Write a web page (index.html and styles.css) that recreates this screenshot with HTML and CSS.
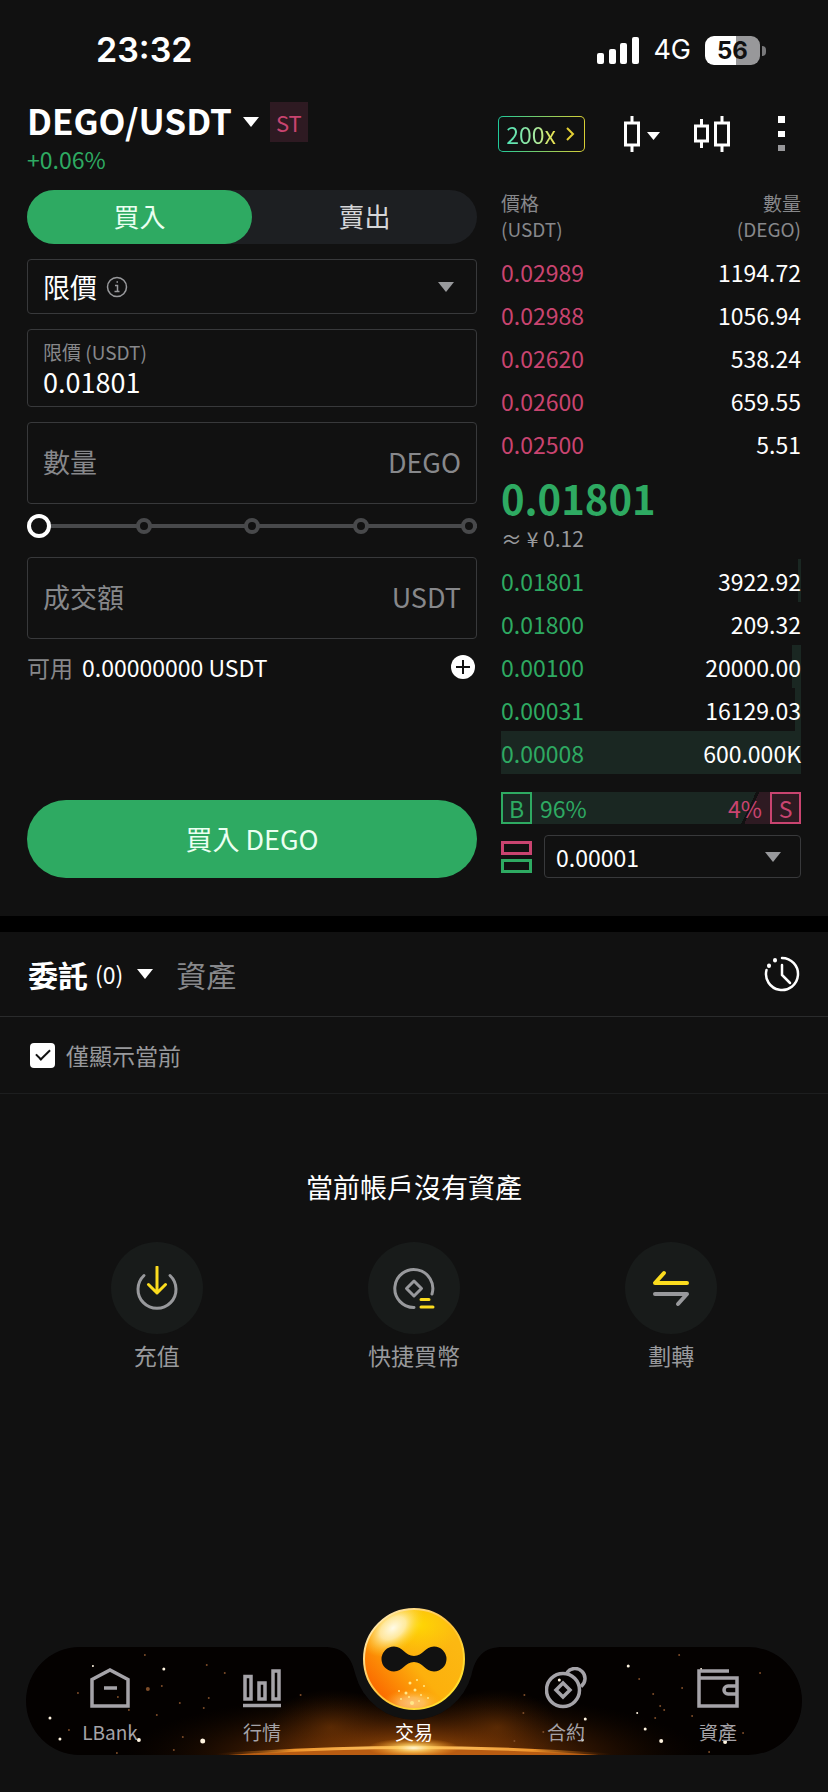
FILE: index.html
```html
<!DOCTYPE html>
<html lang="zh-Hant">
<head>
    <meta charset="UTF-8">
    <meta name="viewport" content="width=device-width, initial-scale=1.0">
    <title>DEGO/USDT</title>
    <link rel="stylesheet" href="styles.css">
</head>
<body>
    <div class="status-bar">
        <span class="time">23:32</span>
        <div class="status-icons">
            <svg width="42" height="27" viewBox="0 0 42 27" fill="#fff">
                <rect x="0" y="16" width="7" height="11" rx="2"/>
                <rect x="12" y="12" width="7" height="15" rx="2"/>
                <rect x="23" y="6" width="7" height="21" rx="2"/>
                <rect x="35" y="0" width="7" height="27" rx="2"/>
            </svg>
            <span class="network">4G</span>
            <span class="battery">56</span>
        </div>
    </div>

    <header class="header">
        <div>
            <div class="pair">
                <h1>DEGO/USDT</h1>
                <span class="caret"></span>
                <span class="tag">ST</span>
            </div>
            <div class="change">+0.06%</div>
        </div>
        <div class="tools">
            <button class="leverage" type="button">
                <span>200x</span>
                <svg width="9" height="14" viewBox="0 0 9 14" fill="none" stroke="#e3cf35" stroke-width="2"><path d="M1 1l6 6-6 6"/></svg>
            </button>
            <button class="icon-btn candle-btn" type="button" aria-label="K線">
                <svg width="36" height="36" viewBox="0 0 36 36">
                    <path d="M8 0v7M8 29v7M1.500 7h13v22h-13z" fill="none" stroke="#fff" stroke-width="3"/>
                    <path d="M23 16h13l-6.500 8z" fill="#fff"/>
                </svg>
            </button>
            <button class="icon-btn" type="button" aria-label="圖表">
                <svg width="36" height="36" viewBox="0 0 36 36" fill="none" stroke="#fff" stroke-width="3">
                    <path d="M7.500 3v7M7.500 25v7M1.500 10h12v15h-12z"/>
                    <path d="M28 0v7M28 29v7M21.500 7h13v22h-13z"/>
                </svg>
            </button>
            <button class="icon-btn more-btn" type="button" aria-label="更多">
                <svg width="7" height="36" viewBox="0 0 7 36">
                    <path d="M0 0h7v7H0zM0 15h7v6H0z" fill="#fff"/>
                    <path d="M0 29h7v6H0z" fill="#98989b"/>
                </svg>
            </button>
        </div>
    </header>

    <main>
        <div class="trade">
            <form class="order-form">
                <div class="side-tabs">
                    <button class="side active" type="button">買入</button>
                    <button class="side" type="button">賣出</button>
                </div>

                <div class="field type-field">
                    <select id="order-type" aria-label="委託類型">
                        <option>限價</option>
                    </select>
                    <svg class="info" width="22" height="22" viewBox="0 0 22 22" fill="none" stroke="#98999c" stroke-width="1.500">
                        <circle cx="11" cy="11" r="9.500"/>
                        <path d="M9 9.500h2.500V15M8.500 15.500h5M10.500 6h1.500"/>
                    </svg>
                    <span class="caret caret-grey"></span>
                </div>

                <div class="field price-field">
                    <label for="price">限價 (USDT)</label>
                    <input type="text" id="price" value="0.01801">
                </div>

                <div class="field amount-field">
                    <input type="text" id="amount" placeholder="數量">
                    <label for="amount">DEGO</label>
                </div>

                <div class="slider">
                    <div class="slider-dots">
                        <span></span><span></span><span></span><span></span><span></span>
                    </div>
                    <input type="range" min="0" max="100" value="0" aria-label="比例">
                </div>

                <div class="field amount-field">
                    <input type="text" id="total" placeholder="成交額">
                    <label for="total">USDT</label>
                </div>

                <div class="available">
                    <span class="muted">可用</span>
                    <span>0.00000000 USDT</span>
                    <button class="icon-btn add-btn" type="button" aria-label="充值">
                        <svg width="24" height="24" viewBox="0 0 24 24">
                            <circle cx="12" cy="12" r="12" fill="#fff"/>
                            <path d="M12 5v14M5 12h14" stroke="#111" stroke-width="2"/>
                        </svg>
                    </button>
                </div>

                <button class="submit" type="submit">買入 DEGO</button>
            </form>

            <section class="book">
                <table>
                    <thead>
                        <tr><th>價格<br>(USDT)</th><th>數量<br>(DEGO)</th></tr>
                    </thead>
                    <tbody class="asks">
                        <tr><td>0.02989</td><td>1194.72</td></tr>
                        <tr><td>0.02988</td><td>1056.94</td></tr>
                        <tr><td>0.02620</td><td>538.24</td></tr>
                        <tr><td>0.02600</td><td>659.55</td></tr>
                        <tr><td>0.02500</td><td>5.51</td></tr>
                    </tbody>
                    <tbody>
                        <tr>
                            <td class="last" colspan="2">
                                <div class="last-price">0.01801</div>
                                <div class="last-fiat">≈ ¥ 0.12</div>
                            </td>
                        </tr>
                    </tbody>
                    <tbody class="bids">
                        <tr style="--depth: 1%"><td>0.01801</td><td>3922.92</td></tr>
                        <tr style="--depth: 0%"><td>0.01800</td><td>209.32</td></tr>
                        <tr style="--depth: 3%"><td>0.00100</td><td>20000.00</td></tr>
                        <tr style="--depth: 2%"><td>0.00031</td><td>16129.03</td></tr>
                        <tr style="--depth: 100%"><td>0.00008</td><td>600.000K</td></tr>
                    </tbody>
                </table>

                <div class="ratio">
                    <span class="ratio-box">B</span>
                    <span class="ratio-buy">96%</span>
                    <span class="ratio-sell">4%</span>
                    <span class="ratio-box sell">S</span>
                </div>

                <div class="precision">
                    <button class="icon-btn" type="button" aria-label="深度顯示">
                        <svg width="31" height="32" viewBox="0 0 31 32" fill="none" stroke-width="3">
                            <path d="M1.500 1.500h28v11h-28z" stroke="#c94470"/>
                            <path d="M1.500 19.500h28v11h-28z" stroke="#2eaa62"/>
                        </svg>
                    </button>
                    <div class="field precision-field">
                        <select id="precision" aria-label="精度">
                            <option>0.00001</option>
                        </select>
                        <span class="caret caret-grey"></span>
                    </div>
                </div>
            </section>
        </div>

        <section class="orders">
            <div class="order-tabs">
                <button class="order-tab active" type="button">委託<small>(0)</small><span class="caret"></span></button>
                <button class="order-tab" type="button">資產</button>
                <button class="icon-btn history-btn" type="button" aria-label="歷史">
                    <svg width="36" height="36" viewBox="0 0 36 36" fill="none" stroke="#fff" stroke-width="2.500" stroke-linecap="round">
                        <path d="M18 2A16 16 0 1 1 2.500 14"/>
                        <path d="M18 9v10l8 8"/>
                        <path d="M11 4v.5M5 9.500v.5" stroke-width="4"/>
                    </svg>
                </button>
            </div>
            <div class="filter">
                <input type="checkbox" id="only-current" checked>
                <label for="only-current">僅顯示當前</label>
            </div>

            <div class="empty">
                <p>當前帳戶沒有資產</p>
                <div class="actions">
                    <a href="#deposit">
                        <span class="circle">
                            <svg width="44" height="44" viewBox="0 0 44 44" fill="none" stroke-width="3" stroke-linecap="round" stroke-linejoin="round">
                                <path d="M9 9.500a19 19 0 1 0 26 0" stroke="#98999c"/>
                                <path d="M22 1v26M13.500 18.500L22 27l8.500-8.500" stroke="#fbdc1e"/>
                            </svg>
                        </span>
                        充值
                    </a>
                    <a href="#buy">
                        <span class="circle">
                            <svg width="44" height="44" viewBox="0 0 44 44" fill="none" stroke-width="3" stroke-linecap="round" stroke-linejoin="round">
                                <path d="M22 41.500A19 19 0 1 1 40 28" stroke="#98999c"/>
                                <path d="M22 15l7.500 7.500L22 30l-7.500-7.500z" stroke="#98999c"/>
                                <path d="M29 33.500h8M29 41h12" stroke="#fbdc1e"/>
                            </svg>
                        </span>
                        快捷買幣
                    </a>
                    <a href="#transfer">
                        <span class="circle">
                            <svg width="44" height="44" viewBox="0 0 44 44" fill="none" stroke-width="4" stroke-linecap="round" stroke-linejoin="round">
                                <path d="M38 17H6l9-10" stroke="#fbdc1e"/>
                                <path d="M6 28h32l-9 10" stroke="#98999c"/>
                            </svg>
                        </span>
                        劃轉
                    </a>
                </div>
            </div>
        </section>
    </main>

    <nav class="nav">
        <svg class="nav-bg" viewBox="0 0 777 108" preserveAspectRatio="none">
            <defs>
                <clipPath id="bar"><path d="M54 0H298C318 0 326 10 330 28A60 60 0 0 0 446 28C450 10 458 0 478 0H723A54 54 0 0 1 723 108H54A54 54 0 0 1 54 0z"/></clipPath>
                <radialGradient id="glow">
                    <stop offset="0" stop-color="#b85c08"/>
                    <stop offset=".4" stop-color="#6b3004" stop-opacity=".8"/>
                    <stop offset="1" stop-color="#1a0a00" stop-opacity="0"/>
                </radialGradient>
                <radialGradient id="cloud">
                    <stop offset="0" stop-color="#8a4206" stop-opacity=".4"/>
                    <stop offset="1" stop-color="#5a2600" stop-opacity="0"/>
                </radialGradient>
                <linearGradient id="horizon">
                    <stop offset="0" stop-color="#7a3503" stop-opacity="0"/>
                    <stop offset=".2" stop-color="#f0952c"/>
                    <stop offset=".5" stop-color="#ffcf70"/>
                    <stop offset=".8" stop-color="#f0952c"/>
                    <stop offset="1" stop-color="#7a3503" stop-opacity="0"/>
                </linearGradient>
                <radialGradient id="flare">
                    <stop offset="0" stop-color="#fff8d8"/>
                    <stop offset=".35" stop-color="#ffcf60" stop-opacity=".8"/>
                    <stop offset="1" stop-color="#ff9a20" stop-opacity="0"/>
                </radialGradient>
            </defs>
            <g clip-path="url(#bar)">
                <rect width="777" height="108" fill="#040100"/>
                <ellipse cx="388" cy="110" rx="290" ry="66" fill="url(#glow)"/>
                <ellipse cx="305" cy="80" rx="60" ry="38" fill="url(#cloud)"/>
                <ellipse cx="472" cy="80" rx="60" ry="38" fill="url(#cloud)"/>
                <path d="M190 109Q388 93 586 109z" fill="#b85c12"/>
                <path d="M190 108Q388 93 586 108" fill="none" stroke="url(#horizon)" stroke-width="3"/>
                <ellipse cx="388" cy="101" rx="46" ry="10" fill="url(#flare)"/>
                <g fill="#fff4e0">
                    <circle cx="138" cy="22" r="1.500"/><circle cx="67" cy="19" r="1"/><circle cx="24" cy="71" r="1.500"/>
                    <circle cx="34" cy="92" r="1.500"/><circle cx="113" cy="93" r="2"/><circle cx="177" cy="94" r="2.500"/>
                    <circle cx="636" cy="94" r="2"/><circle cx="700" cy="95" r="2"/><circle cx="603" cy="19" r="1.500"/>
                    <circle cx="557" cy="93" r="1.500"/><circle cx="620" cy="82" r="1.500"/><circle cx="560" cy="72" r="1.500"/>
                    <circle cx="534" cy="33" r="1.500"/><circle cx="676" cy="22" r="1"/><circle cx="612" cy="66" r="1"/>
                </g>
                <g fill="#7d4c28">
                    <circle cx="119" cy="8" r="1"/><circle cx="122" cy="42" r="2"/><circle cx="136" cy="39" r="1"/>
                    <circle cx="52" cy="46" r="1"/><circle cx="92" cy="50" r="1"/><circle cx="103" cy="63" r="1"/>
                    <circle cx="131" cy="68" r="1"/><circle cx="154" cy="56" r="1"/><circle cx="183" cy="51" r="1"/>
                    <circle cx="178" cy="61" r="1"/><circle cx="157" cy="90" r="1"/><circle cx="148" cy="103" r="1"/>
                    <circle cx="199" cy="26" r="1"/><circle cx="275" cy="48" r="1"/><circle cx="43" cy="83" r="1"/>
                    <circle cx="91" cy="106" r="1"/><circle cx="181" cy="18" r="1"/><circle cx="499" cy="48" r="1"/>
                    <circle cx="498" cy="66" r="1"/><circle cx="628" cy="47" r="1"/><circle cx="635" cy="59" r="1"/>
                    <circle cx="639" cy="63" r="1"/><circle cx="657" cy="41" r="1"/><circle cx="667" cy="69" r="1"/>
                    <circle cx="735" cy="26" r="1"/><circle cx="654" cy="8" r="1"/><circle cx="614" cy="32" r="1"/>
                    <circle cx="489" cy="94" r="1"/><circle cx="518" cy="85" r="1"/><circle cx="684" cy="105" r="1"/>
                    <circle cx="718" cy="86" r="1"/><circle cx="630" cy="71" r="1"/>
                </g>
            </g>
        </svg>
        <a href="#home">
            <svg width="42" height="42" viewBox="0 0 42 42" fill="none" stroke="#a5a3a8" stroke-width="3.500">
                <path d="M3 12.500L21 3l18 9.500V39H3z"/><path d="M15 21h13"/>
            </svg>
            LBank
        </a>
        <a href="#market">
            <svg width="42" height="42" viewBox="0 0 42 42" fill="none" stroke="#a5a3a8" stroke-width="3.500">
                <path d="M4 9.500h6V32H4zM18 16h6v16h-6zM32 4h6v28h-6zM2 38.500h38"/>
            </svg>
            行情
        </a>
        <a class="current" href="#trade">
            <svg class="ball" width="104" height="104" viewBox="0 0 104 104">
                <defs>
                    <clipPath id="disc"><circle cx="52" cy="52" r="50"/></clipPath>
                    <linearGradient id="ball" x1=".1" y1=".8" x2=".8" y2=".2">
                        <stop offset="0" stop-color="#fb6a00"/>
                        <stop offset=".5" stop-color="#fdb00c"/>
                        <stop offset="1" stop-color="#fcb812"/>
                    </linearGradient>
                    <radialGradient id="shine">
                        <stop offset="0" stop-color="#fffbe8"/>
                        <stop offset=".4" stop-color="#fff0b8" stop-opacity=".85"/>
                        <stop offset="1" stop-color="#ffd21e" stop-opacity="0"/>
                    </radialGradient>
                    <radialGradient id="yellow">
                        <stop offset="0" stop-color="#ffe000" stop-opacity=".8"/>
                        <stop offset="1" stop-color="#ffd800" stop-opacity="0"/>
                    </radialGradient>
                    <linearGradient id="rim" x1="0" y1="0" x2="1" y2="1">
                        <stop offset="0" stop-color="#fff3d0"/>
                        <stop offset=".5" stop-color="#ffc23a"/>
                        <stop offset="1" stop-color="#ffec2a"/>
                    </linearGradient>
                </defs>
                <g clip-path="url(#disc)">
                    <circle cx="52" cy="52" r="50" fill="url(#ball)"/>
                    <ellipse cx="56" cy="18" rx="44" ry="30" fill="url(#yellow)"/>
                    <ellipse cx="31" cy="21" rx="36" ry="23" fill="url(#shine)" transform="rotate(-38 31 21)"/>
                    <ellipse cx="50" cy="96" rx="30" ry="14" fill="url(#shine)" opacity=".5"/>
                    <g fill="#ffe888">
                        <circle cx="48" cy="76" r="1.500"/><circle cx="53" cy="83" r="1.500"/><circle cx="44" cy="86" r="1.500"/>
                        <circle cx="59" cy="88" r="1"/><circle cx="50" cy="96" r="2"/><circle cx="39" cy="92" r="1"/>
                        <circle cx="55" cy="73" r="1"/><circle cx="62" cy="79" r="1"/><circle cx="47" cy="90" r="1"/>
                        <circle cx="37" cy="84" r="1"/><circle cx="57" cy="94" r="1"/><circle cx="66" cy="91" r="1"/>
                    </g>
                </g>
                <circle cx="52" cy="52" r="50" fill="none" stroke="url(#rim)" stroke-width="2"/>
                <path d="M32 39.500c9 0 11 9.500 20 9.500s11-9.500 20-9.500a12.500 12.500 0 0 1 0 25c-9 0-11-9.500-20-9.500s-11 9.500-20 9.500a12.500 12.500 0 0 1 0-25z" fill="#111"/>
            </svg>
            交易
        </a>
        <a href="#futures">
            <svg width="42" height="42" viewBox="0 0 42 42" fill="none" stroke="#a5a3a8" stroke-width="3.500">
                <circle cx="18" cy="23" r="16.500"/>
                <path d="M18 16l7 7-7 7-7-7z"/>
                <path d="M22 5.500A10 10 0 1 1 36 19.500"/>
            </svg>
            合約
        </a>
        <a href="#assets">
            <svg width="42" height="42" viewBox="0 0 42 42" fill="none" stroke="#a5a3a8" stroke-width="3.500">
                <path d="M32 4H2v35h38V11H2"/><path d="M40 19h-9a4 4 0 0 0 0 8h9"/>
            </svg>
            資產
        </a>
    </nav>
</body>
</html>
```
FILE: styles.css
```css
* {
    box-sizing: border-box;
}

body {
    font-family: 'Noto Sans CJK TC', 'Noto Sans', sans-serif;
    font-size: 23px;
    line-height: 32px;
    background-color: #111;
    color: #fff;
    margin: 0;
    min-height: 100vh;
    display: flex;
    flex-direction: column;
}

button, input, select {
    font: inherit;
    color: inherit;
    background: none;
    border: none;
    border-radius: 0;
    padding: 0;
    margin: 0;
    appearance: none;
    outline: none;
}

button {
    cursor: pointer;
}

svg {
    display: block;
}

.icon-btn {
    display: block;
}

.caret {
    flex: none;
    border: 8px solid transparent;
    border-top: 10px solid #fff;
    border-bottom: 0;
}

.caret-grey {
    border-top-color: #98999c;
    pointer-events: none;
}

.muted {
    color: #87888b;
}

/* status bar */
.status-bar {
    display: flex;
    justify-content: space-between;
    align-items: center;
    height: 100px;
    padding: 0 61px 0 96px;
    font-family: 'Inter', sans-serif;
}

.time {
    font-size: 34px;
    font-weight: 600;
}

.status-icons {
    display: flex;
    align-items: center;
    gap: 14px;
}

.network {
    font-size: 27px;
}

.battery {
    position: relative;
    width: 55px;
    height: 29px;
    margin-right: 7px;
    border-radius: 9px;
    background: linear-gradient(to right, #fff 56%, #98989a 56%);
    color: #111;
    font-size: 24px;
    font-weight: 700;
    line-height: 29px;
    text-align: center;
}

.battery::after {
    content: '';
    position: absolute;
    right: -6px;
    top: 10px;
    width: 4px;
    height: 10px;
    border-radius: 0 4px 4px 0;
    background-color: #78787a;
}

/* header */
.header {
    display: flex;
    justify-content: space-between;
    height: 90px;
    padding: 0 43px 0 27px;
}

.pair {
    display: flex;
    align-items: center;
    gap: 11px;
    height: 43px;
}

h1 {
    margin: 0;
    padding-bottom: 4px;
    font-size: 35px;
    font-weight: 700;
    line-height: 40px;
}

.tag {
    padding: 4px 6px;
    background-color: #2e1a22;
    color: #c94470;
    font-size: 22px;
}

.change {
    color: #2eaa62;
}

.tools {
    display: flex;
    align-items: center;
    height: 68px;
}

.leverage {
    display: flex;
    align-items: center;
    gap: 10px;
    height: 36px;
    padding: 0 9px 0 7px;
    border: 1px solid transparent;
    border-radius: 5px;
    background:
        linear-gradient(#111, #111) padding-box,
        linear-gradient(to right, #1fc99b, #d9cf35) border-box;
}

.leverage span {
    background: linear-gradient(to right, #4fe3b5, #a8eaa0 60%, #f0e24a);
    background-clip: text;
    color: transparent;
}

.candle-btn {
    margin: 0 34px 0 39px;
}

.more-btn {
    margin-left: 48px;
}

/* trade area */
.trade {
    display: grid;
    grid-template-columns: 3fr 2fr;
    gap: 24px;
    padding: 0 27px 38px;
    border-bottom: 16px solid #000;
}

.order-form {
    display: flex;
    flex-direction: column;
}

.side-tabs {
    display: flex;
    height: 54px;
    margin-bottom: 15px;
    border-radius: 27px;
    background-color: #1d1f22;
}

.side {
    flex: 1;
    padding-bottom: 2px;
    border-radius: 27px;
    font-size: 26px;
    color: #d5d6d8;
}

.side.active {
    background-color: #2eaa62;
    color: #eafff1;
}

.field {
    border: 1px solid #38393b;
    border-radius: 4px;
    padding: 0 15px;
}

.type-field {
    display: flex;
    align-items: center;
    gap: 9px;
    height: 55px;
    margin-bottom: 15px;
    padding-right: 22px;
    font-size: 27px;
}

.type-field .caret {
    margin-left: auto;
}

.price-field {
    display: flex;
    flex-direction: column;
    height: 78px;
    margin-bottom: 15px;
    padding-top: 8px;
}

.price-field label {
    font-size: 19px;
    line-height: 28px;
    color: #87888b;
}

.price-field input {
    font-size: 27px;
    line-height: 32px;
    height: 32px;
}

.amount-field {
    display: flex;
    align-items: center;
    height: 82px;
    padding-bottom: 2px;
    font-size: 27px;
    color: #87888b;
}

.amount-field input {
    flex: 1;
    min-width: 0;
}

.amount-field input::placeholder {
    color: #87888b;
    opacity: 1;
}

.slider {
    display: grid;
    align-items: center;
    height: 53px;
    padding-bottom: 9px;
}

.slider-dots, .slider input {
    grid-area: 1 / 1;
}

.slider-dots {
    display: flex;
    justify-content: space-between;
    background: linear-gradient(#48494b, #48494b) center / 100% 4px no-repeat;
}

.slider-dots span {
    width: 16px;
    height: 16px;
    border: 4px solid #48494b;
    border-radius: 50%;
    background-color: #111;
}

.slider input {
    width: 100%;
    height: 24px;
}

.slider input::-webkit-slider-thumb {
    appearance: none;
    width: 24px;
    height: 24px;
    border: 4px solid #fff;
    border-radius: 50%;
    background-color: #111;
}

.available {
    display: flex;
    align-items: center;
    gap: 9px;
    height: 56px;
}

.add-btn {
    margin-left: auto;
    margin-right: 2px;
}

.submit {
    height: 78px;
    margin-top: auto;
    border-radius: 39px;
    background-color: #2eaa62;
    color: #eafff1;
    font-size: 27px;
}

/* order book */
table {
    width: 100%;
    border-collapse: collapse;
}

th {
    height: 60px;
    padding: 0 0 8px;
    font-size: 19px;
    font-weight: 400;
    line-height: 26px;
    color: #87888b;
    text-align: left;
}

td {
    height: 43px;
    padding: 0;
}

th:last-child, td:last-child {
    text-align: right;
}

.asks td:first-child {
    color: #c94470;
}

.bids td:first-child {
    color: #2eaa62;
}

.bids tr {
    background: linear-gradient(to left, #1a2722 var(--depth), transparent var(--depth));
}

td.last:last-child {
    height: 94px;
    padding-top: 2px;
    text-align: left;
}

.last-price {
    font-size: 40px;
    font-weight: 700;
    line-height: 50px;
    color: #2eaa62;
}

.last-fiat {
    font-size: 21px;
    line-height: 30px;
    color: #98999c;
}

.ratio {
    display: flex;
    justify-content: space-between;
    align-items: center;
    gap: 8px;
    height: 32px;
    margin: 18px 0 11px;
    background: linear-gradient(115deg, #1a2722 81%, #111 81%, #111 82%, #2e1a22 82%);
    color: #2eaa62;
}

.ratio-box {
    width: 31px;
    height: 32px;
    border: 2px solid #2eaa62;
    line-height: 28px;
    text-align: center;
}

.ratio-sell {
    margin-left: auto;
    color: #c94470;
}

.ratio-box.sell {
    border-color: #c94470;
    background-color: #2e1a22;
    color: #c94470;
}

.precision {
    display: flex;
    align-items: center;
    gap: 12px;
}

.precision-field {
    display: flex;
    align-items: center;
    flex: 1;
    height: 43px;
    padding: 0 19px 0 11px;
}

.precision-field select {
    flex: 1;
}

/* orders */
.order-tabs {
    display: flex;
    align-items: center;
    gap: 23px;
    height: 85px;
    padding: 0 28px;
    border-bottom: 1px solid #2a2b2c;
}

.order-tab {
    display: flex;
    align-items: center;
    font-size: 30px;
    line-height: 40px;
    color: #87888b;
}

.order-tab.active {
    font-weight: 700;
    color: #fff;
}

.order-tab small {
    margin: 0 14px 0 7px;
    font-size: 23px;
    font-weight: 400;
}

.history-btn {
    margin-left: auto;
}

.filter {
    display: flex;
    align-items: center;
    gap: 11px;
    height: 77px;
    padding: 0 30px;
    border-bottom: 1px solid #1d1e1f;
    color: #98999c;
}

.filter input {
    display: grid;
    place-items: center;
    width: 25px;
    height: 25px;
    border-radius: 4px;
    background-color: #fff;
}

.filter input:checked::before {
    content: '';
    width: 12px;
    height: 6px;
    margin-bottom: 4px;
    border-left: 2px solid #111;
    border-bottom: 2px solid #111;
    transform: rotate(-45deg);
}

.empty {
    padding-top: 73px;
}

.empty p {
    margin: 0 0 35px;
    font-size: 27px;
    line-height: 40px;
    text-align: center;
}

.actions {
    display: grid;
    grid-template-columns: repeat(3, 1fr);
    padding: 0 28px;
}

.actions a {
    display: flex;
    flex-direction: column;
    align-items: center;
    gap: 5px;
    color: #98999c;
    text-decoration: none;
}

.circle {
    display: grid;
    place-items: center;
    width: 92px;
    height: 92px;
    border-radius: 50%;
    background-color: #181b1a;
}

/* bottom navigation */
.nav {
    position: relative;
    display: grid;
    grid-template-columns: repeat(5, 1fr);
    grid-template-rows: 108px;
    align-items: end;
    margin: auto 26px 37px;
    padding: 0 8px;
}

.nav-bg {
    position: absolute;
    inset: 0;
    width: 100%;
    height: 100%;
}

.nav a {
    position: relative;
    display: flex;
    flex-direction: column;
    align-items: center;
    gap: 9px;
    padding-bottom: 9px;
    font-size: 19px;
    line-height: 28px;
    color: #a5a3a8;
    text-decoration: none;
}

/* the ball sticks out above the bar */
.nav a.current {
    gap: 7px;
    color: #fff;
}
```
